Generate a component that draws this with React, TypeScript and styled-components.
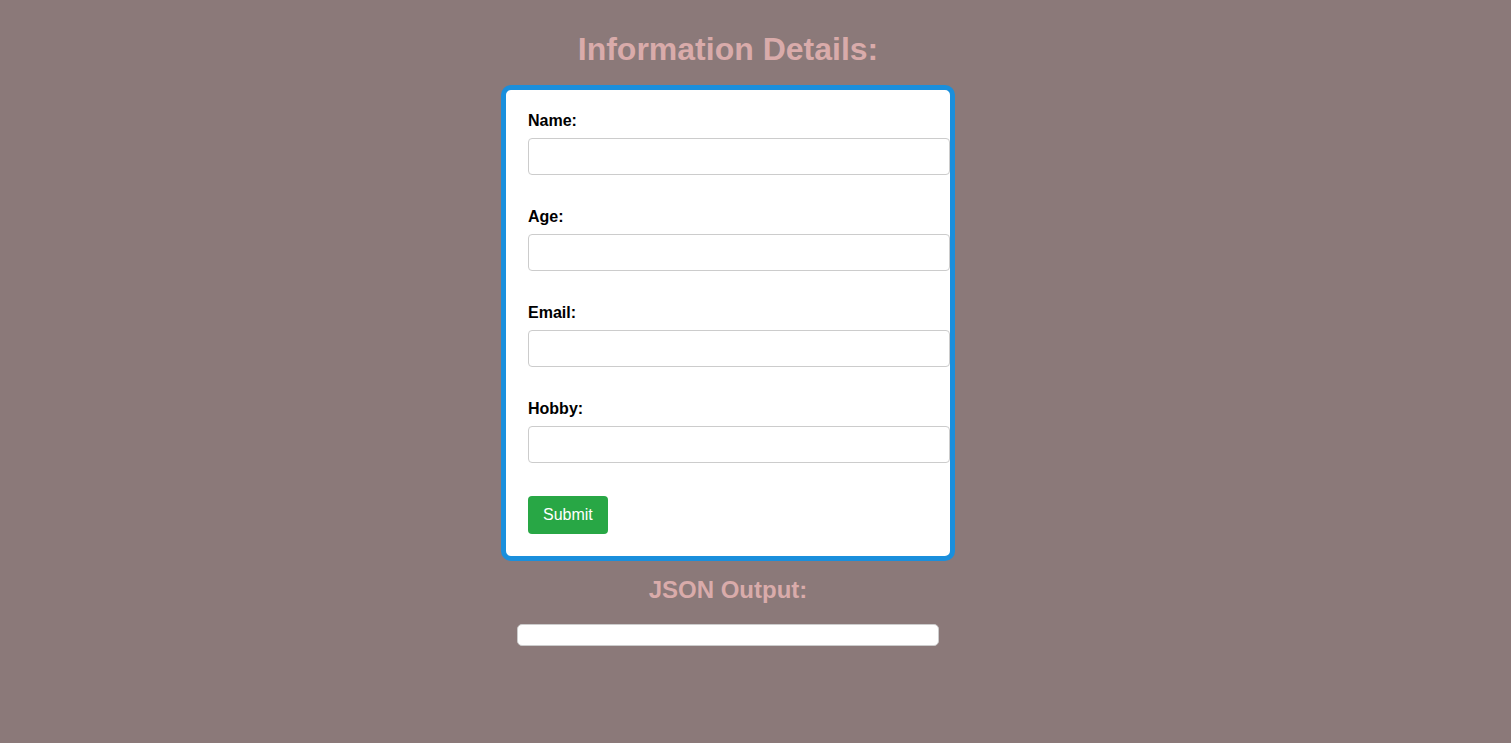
import styled, { createGlobalStyle } from "styled-components";

const GlobalStyle = createGlobalStyle`
  html, body {
    margin: 0;
    padding: 0;
    background: #8b7979;
    font-family: "Liberation Sans", Arial, sans-serif;
  }
  body {
    min-height: 743px;
  }
`;

const Page = styled.div`
  display: flex;
  flex-direction: column;
  align-items: center;
  width: 1456px;
  padding-top: 31px;
`;

const Title = styled.h1`
  margin: 0 0 17px;
  font-size: 32px;
  font-weight: bold;
  color: #d9abaa;
  line-height: 37px;
`;

const Card = styled.form`
  width: 400px;
  padding: 22px;
  background: #ffffff;
  border: 5px solid #1a8fdc;
  border-radius: 10px;
`;

const Field = styled.div`
  display: flex;
  flex-direction: column;
  margin-bottom: 33px;
`;

const Label = styled.label`
  font-size: 16px;
  font-weight: bold;
  color: #000;
  line-height: 18px;
  margin-bottom: 8px;
`;

const Input = styled.input`
  width: 400px;
  padding: 10px;
  border: 1px solid #cccccc;
  border-radius: 4px;
  font-family: "Liberation Sans", Arial, sans-serif;
  font-size: 13.33px;
  line-height: 15px;
  outline: none;
`;

const Button = styled.button`
  display: block;
  padding: 10px 15px;
  background: #28a745;
  color: #ffffff;
  border: none;
  border-radius: 4px;
  font-family: "Liberation Sans", Arial, sans-serif;
  font-size: 16px;
  line-height: 18px;
  cursor: pointer;
`;

const Subtitle = styled.h2`
  margin: 15px 0 20px;
  font-size: 24px;
  font-weight: bold;
  color: #d9abaa;
  line-height: 28px;
`;

const Output = styled.pre`
  width: 400px;
  margin: 0;
  padding: 10px;
  background: #ffffff;
  border: 1px solid #cccccc;
  border-radius: 5px;
  font-family: "Liberation Mono", monospace;
  font-size: 13px;
  line-height: 0;
`;

const fields = ["Name", "Age", "Email", "Hobby"];

export default function App() {
  return (
    <>
      <GlobalStyle />
      <Page>
        <Title>Information Details:</Title>
        <Card onSubmit={(e) => e.preventDefault()}>
          {fields.map((field) => (
            <Field key={field}>
              <Label htmlFor={field.toLowerCase()}>{field}:</Label>
              <Input id={field.toLowerCase()} type="text" />
            </Field>
          ))}
          <Button type="submit">Submit</Button>
        </Card>
        <Subtitle>JSON Output:</Subtitle>
        <Output></Output>
      </Page>
    </>
  );
}
